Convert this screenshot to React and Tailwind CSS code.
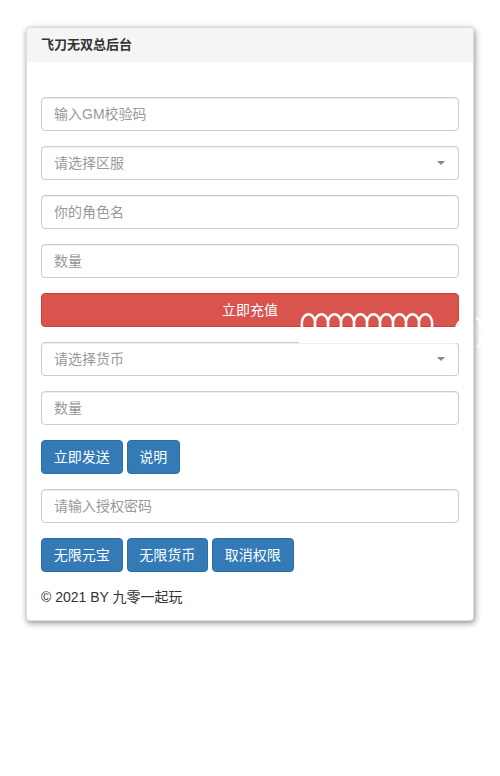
import { useState } from 'react';

const font = { fontFamily: '"Liberation Sans", "Noto Sans CJK SC", sans-serif' };

function Field({ placeholder }) {
  return (
    <input
      placeholder={placeholder}
      className="block w-full h-[34px] px-3 text-sm text-[#555] placeholder:text-[#999] bg-white border border-[#ccc] rounded outline-none shadow-[inset_0_1px_1px_rgba(0,0,0,0.075)]"
    />
  );
}

function Select({ placeholder }) {
  return (
    <div className="relative h-[34px] w-full border border-[#ccc] rounded bg-white flex items-center px-3 shadow-[inset_0_1px_1px_rgba(0,0,0,0.075)]">
      <span className="text-sm text-[#999]">{placeholder}</span>
      <span className="ml-auto mr-[1px] w-0 h-0 border-l-[4px] border-r-[4px] border-t-[4px] border-l-transparent border-r-transparent border-t-[#888]" />
    </div>
  );
}

function Btn({ children }) {
  return (
    <button className="h-[34px] px-[11.75px] text-sm text-white bg-[#337ab7] border border-[#2e6da4] rounded">
      {children}
    </button>
  );
}

// 白色卷线
const loops = Array.from({ length: 10 }, (_, i) => {
  const x = 3 + i * 13;
  return `M${x} 17 C${x - 2} 0 ${x + 15} 0 ${x + 13} 17`;
}).join(' ');

export default function App() {
  const [server] = useState('');

  return (
    <div className="w-[500px] h-[776px] bg-white pt-[27px] pl-[26px]" style={font}>
      <div className="relative w-[448px] bg-white border border-[#ddd] rounded shadow-[1px_2px_6px_rgba(0,0,0,0.45)]">
        {/* 标题 */}
        <div className="h-[34px] bg-[#f5f5f5] px-[14px] flex items-center rounded-t">
          <h3 className="text-[13px] font-bold text-[#333]">飞刀无双总后台</h3>
        </div>

        <div className="px-[14px] pt-[35px] pb-[13px] flex flex-col gap-[15px]">
          <Field placeholder="输入GM校验码" />
          <Select placeholder={server || '请选择区服'} />
          <Field placeholder="你的角色名" />
          <Field placeholder="数量" />
          <button className="h-[34px] w-full text-sm text-white bg-[#d9534f] border border-[#d43f3a] rounded">
            立即充值
          </button>
          <Select placeholder="请选择货币" />
          <Field placeholder="数量" />
          <div className="flex gap-1">
            <Btn>立即发送</Btn>
            <Btn>说明</Btn>
          </div>
          <Field placeholder="请输入授权密码" />
          <div className="flex gap-1">
            <Btn>无限元宝</Btn>
            <Btn>无限货币</Btn>
            <Btn>取消权限</Btn>
          </div>
          <p className="text-sm leading-5 text-[#333]">© 2021 BY 九零一起玩</p>
        </div>

        {/* 水印涂抹 */}
        <svg
          className="absolute left-[272px] top-[282px] pointer-events-none"
          width="190"
          height="40"
          viewBox="0 0 190 40"
          fill="none"
        >
          <rect x="0" y="17" width="160" height="16" fill="#fff" />
          <path d={loops} stroke="#fff" strokeWidth="2.5" strokeLinecap="round" />
          <path d="M156 24 C156 14 162 8 168 8" stroke="#fff" strokeWidth="2" />
          <path d="M177 8 C182 10 182 14 181 20 M181 28 C182 32 181 35 178 37" stroke="#fff" strokeWidth="2" />
        </svg>
      </div>
    </div>
  );
}
